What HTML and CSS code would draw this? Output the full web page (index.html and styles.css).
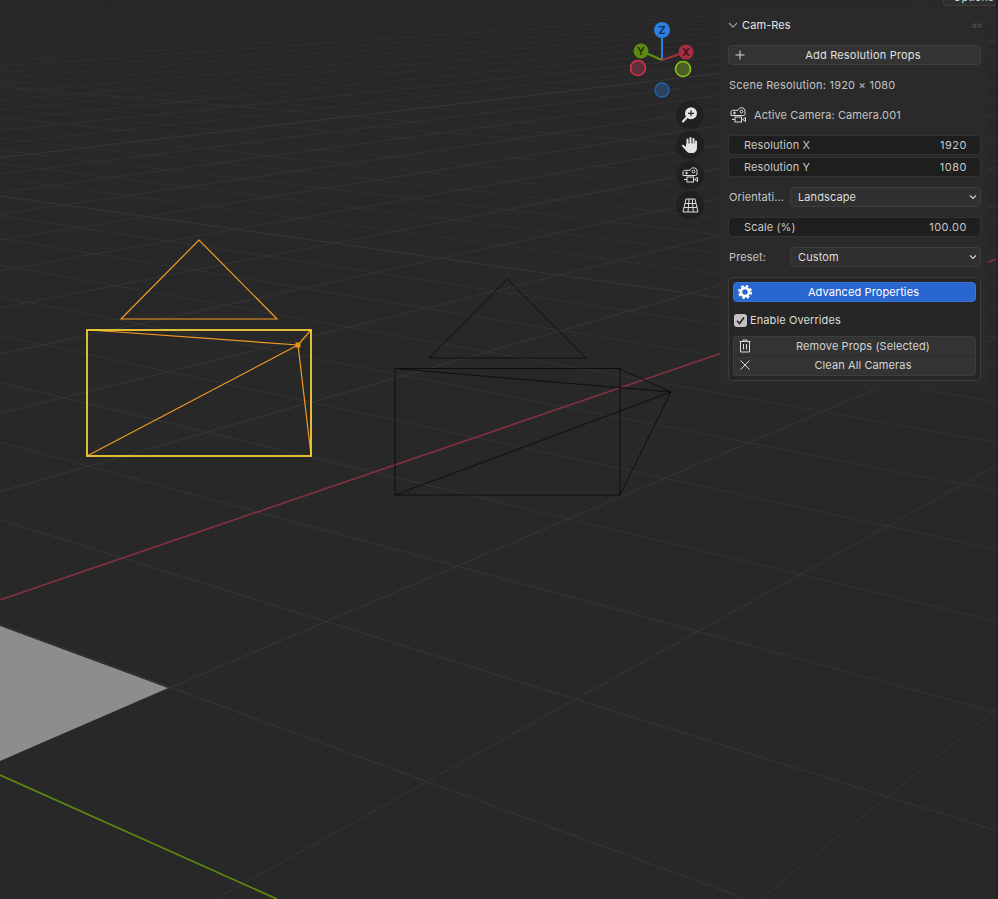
FILE: index.html
```html
<!DOCTYPE html>
<html lang="en">
<head>
    <meta charset="UTF-8">
    <meta name="viewport" content="width=device-width, initial-scale=1.0">
    <title>Cam-Res</title>
    <link rel="stylesheet" href="styles.css">
</head>
<body>

<div class="viewport">
    <svg class="scene" id="scene" width="998" height="899" viewBox="0 0 998 899">
        <g id="gridLines"></g>
        <polygon class="plane" points="0,626 168,688 0,761"/>
        <line class="axis-x" x1="0" y1="600" x2="998" y2="258.6"/>
        <line class="axis-y" x1="0" y1="775" x2="277" y2="899"/>

        <!-- selected camera -->
        <polygon class="cam-sel-thin" points="199,240 121,319 277,319"/>
        <path class="cam-sel-thin" d="M90 330 L298 345 M87 456 L298 345 M311 455 L298 345 M311 330 L298 345"/>
        <rect class="cam-sel-frame" x="87" y="330" width="224" height="126"/>
        <rect class="cam-sel-dot" x="295.5" y="342.5" width="5" height="5"/>

        <!-- other camera -->
        <polygon class="cam-dark" points="507,279 429,358 586,358"/>
        <rect class="cam-dark" x="395" y="368.5" width="225" height="126.5"/>
        <path class="cam-dark" d="M400 369 L671 392 M395 495 L671 392 M620 495 L671 392 M620 369 L671 392"/>
    </svg>

    <svg class="gizmo" width="70" height="80" viewBox="0 0 70 80">
        <line class="gizmo-z" x1="32" y1="40" x2="32" y2="10"/>
        <line class="gizmo-y" x1="32" y1="40" x2="11" y2="31"/>
        <line class="gizmo-x" x1="32" y1="40" x2="56" y2="32"/>
        <circle class="dot-z" cx="32" cy="10" r="8"/>
        <circle class="dot-y" cx="11" cy="31" r="7.5"/>
        <circle class="dot-x" cx="56" cy="32" r="7.5"/>
        <circle class="ring-x" cx="8" cy="48" r="7.5"/>
        <circle class="ring-y" cx="53" cy="49" r="7.5"/>
        <circle class="ring-z" cx="32" cy="70" r="7"/>
        <text class="letter-z" x="32" y="14">Z</text>
        <text class="letter-y" x="11" y="35">Y</text>
        <text class="letter-x" x="56" y="36">X</text>
    </svg>

    <div class="nav-buttons">
        <div class="nav-btn">
            <svg width="18" height="18" viewBox="0 0 18 18">
                <circle cx="10" cy="7.3" r="6" fill="#e4e4e4"/>
                <path d="M10 4.3 V10.3 M7 7.3 H13" stroke="#222" stroke-width="1.2"/>
                <path d="M5.6 11.6 L2 15.4" stroke="#e4e4e4" stroke-width="2.2" stroke-linecap="round"/>
            </svg>
        </div>
        <div class="nav-btn">
            <svg width="18" height="18" viewBox="0 0 18 18">
                <path d="M6.5 9 V3.5 M9.5 8.5 V2 M12.5 8.5 V3 M15 9.5 V5.5 M2 9.8 L5.5 13.5" stroke="#e4e4e4" stroke-width="2" stroke-linecap="round"/>
                <path d="M5.5 7.5 H16 V11.5 C16 15 14 17 11 17 H9 C7 17 5.5 15.5 4 13 Z" fill="#e4e4e4"/>
            </svg>
        </div>
        <div class="nav-btn">
            <svg class="line-icon" width="18" height="18" viewBox="0 0 18 18">
                <path d="M2 9.5 V6 C2 4.8 3 4.3 4 4.3 H9 C9.6 2.6 11 1.8 12.5 1.8 C14.8 1.8 16.3 3.4 16 5.5 V8 C16 9 15.4 9.5 14.5 9.5 Z"/>
                <circle cx="12.5" cy="5.5" r="1.4"/>
                <path d="M4 7 H7 M5.5 5.6 V8.4"/>
                <rect x="6" y="11" width="6.5" height="5"/>
                <path d="M3 13.5 H6 M13.5 13.5 L16.5 11.5 V15.5 Z"/>
            </svg>
        </div>
        <div class="nav-btn">
            <svg class="line-icon" width="18" height="18" viewBox="0 0 18 18">
                <path d="M5 3 H14 L17 16 H2 Z M4 7.5 H15 M3 11.5 H16 M8 3 L7 16 M11.3 3 L12.3 16"/>
            </svg>
        </div>
    </div>

    <div class="options-btn">Options</div>
    <div class="edge-strip"></div>

    <div class="panel">
        <div class="panel-header">
            <svg class="chevron" width="10" height="10" viewBox="0 0 10 10"><path d="M1 3 L5 7.2 L9 3"/></svg>
            <span class="panel-title">Cam-Res</span>
            <span class="grip"></span>
        </div>

        <div class="btn btn-wide">
            <svg class="btn-icon" width="12" height="12" viewBox="0 0 12 12"><path d="M6 1.5 V10.5 M1.5 6 H10.5"/></svg>
            <span class="btn-label">Add Resolution Props</span>
        </div>

        <div class="info-row scene-row">Scene Resolution: 1920 × 1080</div>

        <div class="info-row camera-row">
            <svg class="line-icon" width="18" height="18" viewBox="0 0 18 18">
                <path d="M2 9.5 V6 C2 4.8 3 4.3 4 4.3 H9 C9.6 2.6 11 1.8 12.5 1.8 C14.8 1.8 16.3 3.4 16 5.5 V8 C16 9 15.4 9.5 14.5 9.5 Z"/>
                <circle cx="12.5" cy="5.5" r="1.4"/>
                <path d="M4 7 H7 M5.5 5.6 V8.4"/>
                <rect x="6" y="11" width="6.5" height="5"/>
                <path d="M3 13.5 H6 M13.5 13.5 L16.5 11.5 V15.5 Z"/>
            </svg>
            <span>Active Camera: Camera.001</span>
        </div>

        <div class="field-group">
            <div class="field"><span>Resolution X</span><span class="value">1920</span></div>
            <div class="field"><span>Resolution Y</span><span class="value">1080</span></div>
        </div>

        <div class="select-row">
            <span class="select-label">Orientati...</span>
            <div class="select"><span>Landscape</span>
                <svg class="chevron" width="8" height="8" viewBox="0 0 8 8"><path d="M1 2.5 L4 5.5 L7 2.5"/></svg>
            </div>
        </div>

        <div class="field single"><span>Scale (%)</span><span class="value">100.00</span></div>

        <div class="select-row">
            <span class="select-label">Preset:</span>
            <div class="select"><span>Custom</span>
                <svg class="chevron" width="8" height="8" viewBox="0 0 8 8"><path d="M1 2.5 L4 5.5 L7 2.5"/></svg>
            </div>
        </div>

        <div class="advanced-box">
            <div class="btn btn-blue">
                <svg class="gear" width="14" height="14" viewBox="0 0 14 14">
                    <circle cx="7" cy="7" r="4" fill="none" stroke="#fff" stroke-width="2.6"/>
                    <circle cx="7" cy="7" r="5.9" fill="none" stroke="#fff" stroke-width="2.2" stroke-dasharray="2.6 2.03"/>
                </svg>
                <span class="btn-label">Advanced Properties</span>
            </div>
            <label class="check-row">
                <span class="check">
                    <svg width="13" height="13" viewBox="0 0 13 13"><path d="M3 6.8 L5.5 9.5 L10 3.5"/></svg>
                </span>
                Enable Overrides
            </label>
            <div class="btn-stack">
                <div class="btn">
                    <svg class="btn-icon" width="12" height="14" viewBox="0 0 12 14"><path d="M0.5 2.5 H11.5 M4 2.5 V1 H8 V2.5 M1.5 2.5 V13 H10.5 V2.5 M4.5 5 V10.5 M7.5 5 V10.5"/></svg>
                    <span class="btn-label">Remove Props (Selected)</span>
                </div>
                <div class="btn">
                    <svg class="btn-icon" width="12" height="12" viewBox="0 0 12 12"><path d="M1.5 1.5 L10.5 10.5 M10.5 1.5 L1.5 10.5"/></svg>
                    <span class="btn-label">Clean All Cameras</span>
                </div>
            </div>
        </div>
    </div>
</div>

<script src="grid.js"></script>
</body>
</html>
```

FILE: styles.css
```css
body {
    margin: 0;
    background-color: #282828;
    font-family: Inter, "Liberation Sans", sans-serif;
    font-size: 11px;
    letter-spacing: 0.1px;
    color: #d4d4d4;
}
.viewport {
    position: relative;
    width: 998px;
    height: 899px;
    overflow: hidden;
    background-color: #282828;
}
.scene {
    position: absolute;
    top: 0;
    left: 0;
}
.plane {
    fill: #8d8d8f;
}
.axis-x {
    stroke: #82303f;
    stroke-width: 1.7;
}
.axis-y {
    stroke: #5c8a10;
    stroke-width: 1.7;
}
.cam-sel-thin {
    fill: none;
    stroke: #f29a24;
    stroke-width: 1.2;
}
.cam-sel-frame {
    fill: none;
    stroke: #ffd83a;
    stroke-width: 1.7;
}
.cam-sel-dot {
    fill: #e88f1e;
}
.cam-dark {
    fill: none;
    stroke: #0c0c0c;
    stroke-width: 0.9;
}

/* gizmo */
.gizmo {
    position: absolute;
    left: 630px;
    top: 20px;
}
.gizmo-z { stroke: #2a7fe0; stroke-width: 2; }
.gizmo-y { stroke: #5f9112; stroke-width: 2; }
.gizmo-x { stroke: #a3303f; stroke-width: 2; }
.dot-z { fill: #2a7fe0; }
.dot-y { fill: #5f8a12; }
.dot-x { fill: #a52f42; }
.ring-x { fill: #5e303a; stroke: #d8304f; stroke-width: 1.6; }
.ring-y { fill: #4d5e26; stroke: #84c60e; stroke-width: 1.6; }
.ring-z { fill: #2a4260; stroke: #2463a8; stroke-width: 1.4; }
.gizmo text {
    font-size: 11px;
    font-weight: 600;
    text-anchor: middle;
    letter-spacing: 0;
}
.letter-z { fill: #0f2c50; }
.letter-y { fill: #1f2e06; }
.letter-x { fill: #3e0d16; }

.nav-buttons {
    position: absolute;
    left: 676px;
    top: 101px;
    display: flex;
    flex-direction: column;
    gap: 2px;
}
.nav-btn {
    width: 28px;
    height: 28px;
    border-radius: 50%;
    background-color: #202020;
    display: flex;
    align-items: center;
    justify-content: center;
}
.line-icon {
    fill: none;
    stroke: #dcdcdc;
    stroke-width: 1;
}

.options-btn {
    position: absolute;
    left: 943px;
    top: -14px;
    width: 60px;
    height: 20px;
    line-height: 20px;
    padding-left: 9px;
    background-color: #2e2e2e;
    border: 1px solid #3f3f3f;
    border-radius: 4px;
    box-sizing: border-box;
    color: #d8d8d8;
}
.edge-strip {
    position: absolute;
    right: 0;
    top: 0;
    width: 2px;
    height: 100%;
    background-color: #222;
}

/* side panel */
.panel {
    position: absolute;
    left: 720px;
    top: 10px;
    width: 268px;
    height: 379px;
    box-sizing: border-box;
    padding: 5px 7px 0 8px;
    background-color: #2a2a2a;
    border-radius: 4px;
}
.panel-header {
    display: flex;
    align-items: center;
    height: 20px;
}
.panel-header .chevron {
    margin-right: 4px;
}
.panel-title {
    color: #e6e6e6;
    flex-grow: 1;
}
.chevron path {
    fill: none;
    stroke: #9a9a9a;
    stroke-width: 1.2;
}
.grip {
    width: 10px;
    height: 5px;
    margin-right: -1px;
    background-image: radial-gradient(#7a7a7a 0.6px, transparent 0.9px);
    background-size: 2.5px 2.5px;
}

.btn {
    display: flex;
    align-items: center;
    height: 20px;
    box-sizing: border-box;
    background-color: #333;
    border: 1px solid #3d3d3d;
    border-radius: 4px;
    color: #e0e0e0;
}
.btn-wide {
    margin-top: 10px;
    letter-spacing: 0.2px;
}
.btn-icon {
    margin-left: 5px;
    flex-shrink: 0;
}
.btn-icon path {
    fill: none;
    stroke: #d8d8d8;
    stroke-width: 1;
}
.btn-label {
    flex-grow: 1;
    text-align: center;
}

.info-row {
    display: flex;
    align-items: center;
    height: 20px;
    margin-top: 10px;
    padding-left: 1px;
    color: #c4c4c4;
}
.scene-row {
    letter-spacing: 0.23px;
}
.camera-row {
    gap: 7px;
}

.field-group {
    margin-top: 10px;
    display: flex;
    flex-direction: column;
    gap: 2px;
}
.field {
    display: flex;
    justify-content: space-between;
    align-items: center;
    height: 20px;
    box-sizing: border-box;
    padding: 0 13px 0 15px;
    background-color: #1e1e1e;
    border: 1px solid #343434;
    border-radius: 4px;
    color: #c8c8c8;
}
.field.single {
    margin-top: 10px;
}
.value {
    letter-spacing: 0.5px;
}

.select-row {
    display: flex;
    align-items: center;
    margin-top: 10px;
}
.select-label {
    width: 61px;
    padding-left: 1px;
    color: #c4c4c4;
}
.select {
    flex-grow: 1;
    display: flex;
    justify-content: space-between;
    align-items: center;
    height: 20px;
    box-sizing: border-box;
    padding: 0 3px 0 7px;
    background-color: #303030;
    border: 1px solid #3d3d3d;
    border-radius: 4px;
    color: #dcdcdc;
}
.select .chevron path {
    stroke: #d0d0d0;
}

.advanced-box {
    margin-top: 10px;
    height: 104px;
    box-sizing: border-box;
    padding: 4px;
    background-color: #262626;
    border: 1px solid #3d3d3d;
    border-radius: 5px;
}
.btn-blue {
    background-color: #2a66cf;
    border-color: #3a74d8;
    color: #fff;
}
.gear {
    margin-left: 4px;
    flex-shrink: 0;
}
.check-row {
    display: flex;
    align-items: center;
    gap: 3px;
    height: 20px;
    margin-top: 8px;
    padding-left: 1px;
    color: #dcdcdc;
}
.check {
    width: 13px;
    height: 13px;
    background-color: #c2c2c2;
    border-radius: 3px;
}
.check svg {
    display: block;
}
.check path {
    fill: none;
    stroke: #222;
    stroke-width: 1.6;
}
.btn-stack {
    margin-top: 6px;
}
.btn-stack .btn {
    border-radius: 0;
    color: #d4d4d4;
}
.btn-stack .btn:first-child {
    border-radius: 4px 4px 0 0;
    border-bottom-color: #2a2a2a;
}
.btn-stack .btn:last-child {
    border-radius: 0 0 4px 4px;
    border-top: none;
    padding-bottom: 2px;
}
```

FILE: grid.js
```js
// perspective floor grid, both line families run to a vanishing point on the horizon
var horizon = -73;
var leftVanish = 1967;
var rightVanish = 1900;
var svgNs = "http://www.w3.org/2000/svg";
var group = document.getElementById("gridLines");

function addLine(y1, y2, n) {
    var major = n % 10 === 0;
    var fade = Math.pow(Math.max(0, 1 - n / 45), 2);
    var line = document.createElementNS(svgNs, "line");
    line.setAttribute("x1", 0);
    line.setAttribute("y1", y1);
    line.setAttribute("x2", 998);
    line.setAttribute("y2", y2);
    line.setAttribute("stroke", major ? "#3b3b3b" : "#373737");
    line.setAttribute("stroke-opacity", major ? Math.min(1, fade * 1.25) : fade);
    group.appendChild(line);
}

for (var i = 1; i < 45; i++) {
    var a = 1 / (0.001179 + 0.000254 * i);
    addLine(a + horizon, a * (1 + 998 / rightVanish) + horizon, i);
}
// the x axis sits at index 3 of this family
for (var j = 0; j < 48; j++) {
    if (j === 3) continue;
    var b = 1 / (0.000631 + 0.000285 * j);
    addLine(b + horizon, b * (1 - 998 / leftVanish) + horizon, Math.abs(j - 3));
}
```
